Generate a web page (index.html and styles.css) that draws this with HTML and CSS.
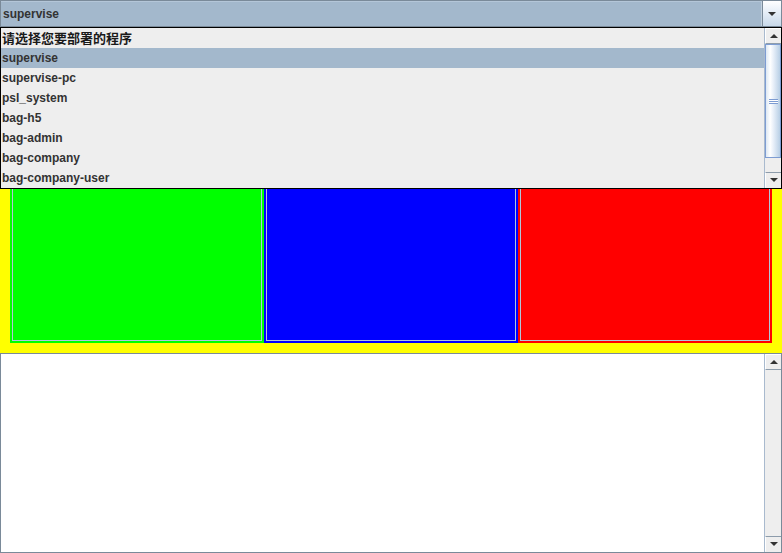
FILE: index.html
```html
<!DOCTYPE html>
<html>
<head>
<meta charset="utf-8">
<link rel="stylesheet" href="styles.css">
</head>
<body>
<div class="app">
  <div class="combo">
    <div class="combo-field">supervise</div>
    <div class="combo-btn">
      <svg class="arrow" width="8" height="4" viewBox="0 0 8 4"><path d="M0 0H8L4 4Z"/></svg>
    </div>
  </div>

  <div class="stage">
    <div class="panel green"><div class="panel-inner"></div></div>
    <div class="panel blue"><div class="panel-inner"></div></div>
    <div class="panel red"><div class="panel-inner"></div></div>
  </div>

  <div class="console">
    <div class="console-text"></div>
    <div class="vscroll">
      <div class="sb-btn"><svg class="arrow" width="8" height="4" viewBox="0 0 8 4"><path d="M4 0L8 4H0Z"/></svg></div>
      <div class="sb-track"></div>
      <div class="sb-btn"><svg class="arrow" width="8" height="4" viewBox="0 0 8 4"><path d="M0 0H8L4 4Z"/></svg></div>
    </div>
  </div>

  <div class="popup">
    <ul class="list">
      <li class="item header">请选择您要部署的程序</li>
      <li class="item selected">supervise</li>
      <li class="item">supervise-pc</li>
      <li class="item">psl_system</li>
      <li class="item">bag-h5</li>
      <li class="item">bag-admin</li>
      <li class="item">bag-company</li>
      <li class="item">bag-company-user</li>
    </ul>
    <div class="vscroll">
      <div class="sb-btn"><svg class="arrow" width="8" height="4" viewBox="0 0 8 4"><path d="M4 0L8 4H0Z"/></svg></div>
      <div class="sb-thumb"><div class="grip"></div></div>
      <div class="sb-track"></div>
      <div class="sb-btn"><svg class="arrow" width="8" height="4" viewBox="0 0 8 4"><path d="M0 0H8L4 4Z"/></svg></div>
    </div>
  </div>
</div>
</body>
</html>
```

FILE: styles.css
```css
html, body {
  margin: 0;
  padding: 0;
  background: #eeeeee;
}

body {
  font-family: "Liberation Sans", Arial, "Noto Sans CJK SC", sans-serif;
  font-size: 12px;
  font-weight: bold;
  color: #333333;
}

.app {
  position: relative;
  width: 782px;
  height: 553px;
  display: flex;
  flex-direction: column;
  overflow: hidden;
}

/* combo box */
.combo {
  height: 27px;
  box-sizing: border-box;
  display: flex;
  border: 1px solid #7a8a99;
  background: #a3b8cc;
  flex: none;
}

.combo-field {
  flex: 1;
  padding-left: 2px;
  line-height: 24px;
  border-right: 1px solid #c3d1df;
  border-top: 1px solid #b4c6d8;
}

.combo-btn {
  width: 18px;
  border-left: 1px solid #7a8a99;
  background: linear-gradient(#ffffff, #e6eef7 45%, #c9d9ea);
  display: flex;
  align-items: center;
  justify-content: center;
}

.arrow path {
  fill: #333333;
}

/* yellow stage with three panels */
.stage {
  height: 326px;
  box-sizing: border-box;
  padding: 10px;
  background: #ffff00;
  display: flex;
  flex: none;
}

.panel {
  flex: 1;
  padding: 2px;
}

.panel-inner {
  height: 100%;
  box-sizing: border-box;
  border: 1px solid #b2c5d9;
}

.green { background: #00ff00; }
.blue { background: #0000ff; }
.red { background: #ff0000; }

/* bottom text area */
.console {
  height: 200px;
  box-sizing: border-box;
  border: 1px solid #7a8a99;
  background: #ffffff;
  display: flex;
  flex: none;
}

.console-text {
  flex: 1;
}

/* scrollbar */
.vscroll {
  width: 17px;
  box-sizing: border-box;
  display: flex;
  flex-direction: column;
  background: #eeeeee;
  border-left: 1px solid #a9bace;
  flex: none;
}

.sb-btn {
  height: 16px;
  box-sizing: border-box;
  background: #eeeeee;
  border-top: 1px solid #ffffff;
  border-left: 1px solid #ffffff;
  border-bottom: 1px solid #8d9cab;
  display: flex;
  align-items: center;
  justify-content: center;
  flex: none;
}

.sb-btn + .sb-track + .sb-btn,
.sb-track + .sb-btn {
  border-top: 1px solid #8d9cab;
  border-bottom: 1px solid #eeeeee;
}

.sb-track {
  flex: 1;
  background: #eeeeee;
}

.sb-thumb {
  height: 114px;
  box-sizing: border-box;
  border: 1px solid #7d9cd2;
  background: linear-gradient(to right, #dde8f3 0%, #ffffff 30%, #e6eef8 55%, #b8cfe5 100%);
  display: flex;
  align-items: center;
  justify-content: center;
  flex: none;
}

.grip {
  width: 9px;
  height: 5px;
  background: repeating-linear-gradient(#7d9cd2 0 1px, #ffffff 1px 2px);
}

/* popup list overlaying the stage */
.popup {
  position: absolute;
  top: 27px;
  left: 0;
  width: 782px;
  height: 162px;
  box-sizing: border-box;
  border: 1px solid #000000;
  background: #eeeeee;
  display: flex;
}

.list {
  flex: 1;
  margin: 0;
  padding: 0;
  list-style: none;
}

.item {
  height: 20px;
  line-height: 20px;
  padding-left: 1px;
  white-space: nowrap;
}

.header {
  font-family: "Noto Sans CJK SC", "Liberation Sans", sans-serif;
  font-size: 13px;
  color: #1a1a1a;
}

.selected {
  background: #a3b8cc;
}
```
